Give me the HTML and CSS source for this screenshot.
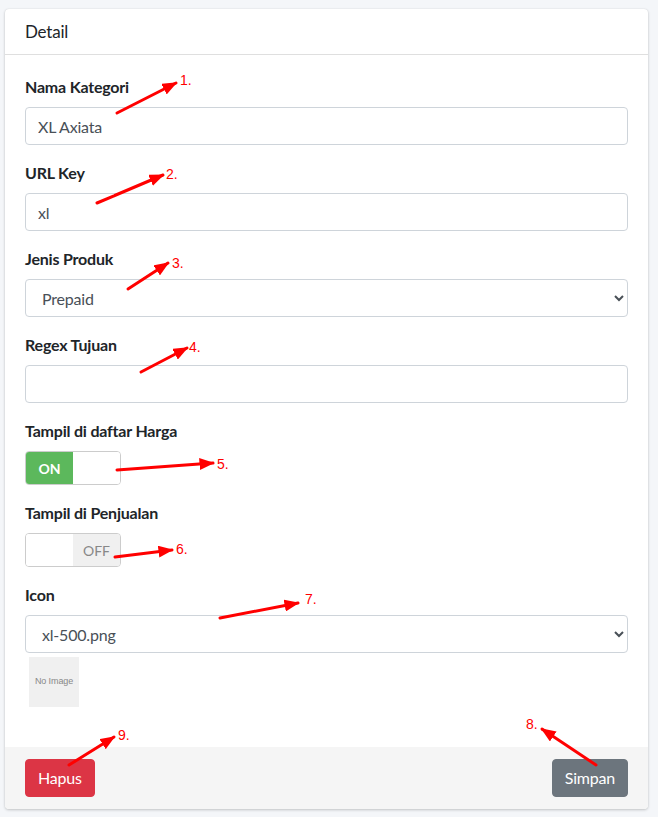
FILE: index.html
```html
<!DOCTYPE html>
<html>
<head>
<meta charset="utf-8">
<link rel="stylesheet" href="styles.css">
</head>
<body>
<div class="page">
  <div class="card">
    <div class="card-header"><h3 class="card-title">Detail</h3></div>
    <div class="card-body">
      <div class="form-group">
        <label class="lbl">Nama Kategori</label>
        <input class="form-control" type="text" value="XL Axiata">
      </div>
      <div class="form-group">
        <label class="lbl">URL Key</label>
        <input class="form-control" type="text" value="xl">
      </div>
      <div class="form-group">
        <label class="lbl">Jenis Produk</label>
        <select class="form-control"><option>Prepaid</option></select>
      </div>
      <div class="form-group">
        <label class="lbl">Regex Tujuan</label>
        <input class="form-control" type="text" value="">
      </div>
      <div class="form-group">
        <label class="lbl">Tampil di daftar Harga</label>
        <div class="toggle">
          <span class="t-on">ON</span><span class="t-handle"></span>
        </div>
      </div>
      <div class="form-group">
        <label class="lbl">Tampil di Penjualan</label>
        <div class="toggle">
          <span class="t-handle"></span><span class="t-off">OFF</span>
        </div>
      </div>
      <div class="form-group">
        <label class="lbl">Icon</label>
        <select class="form-control"><option>xl-500.png</option></select>
        <div class="noimg">No Image</div>
      </div>
    </div>
    <div class="card-footer">
      <button class="btn btn-danger">Hapus</button>
      <button class="btn btn-secondary">Simpan</button>
    </div>
  </div>
  <svg class="notes" width="658" height="817" viewBox="0 0 658 817">
    <defs>
      <marker id="ah" markerWidth="5" markerHeight="4" refX="4.5" refY="2" orient="auto" markerUnits="strokeWidth">
        <path d="M0,0 L5,2 L0,4 Z" fill="#f00"/>
      </marker>
    </defs>
    <g stroke="#f00" stroke-width="3" stroke-linecap="round" fill="none" marker-end="url(#ah)">
      <line x1="117" y1="113" x2="176" y2="83"/>
      <line x1="97" y1="203" x2="163" y2="175"/>
      <line x1="128" y1="289" x2="168" y2="263"/>
      <line x1="141" y1="372" x2="187" y2="348"/>
      <line x1="117" y1="470" x2="213" y2="463"/>
      <line x1="115" y1="557" x2="172" y2="550"/>
      <line x1="220" y1="618" x2="298" y2="603"/>
      <line x1="596" y1="765" x2="542" y2="729"/>
      <line x1="69" y1="765" x2="114" y2="737"/>
    </g>
    <g class="num" fill="#f00">
      <text x="180" y="85">1.</text>
      <text x="166" y="179">2.</text>
      <text x="172" y="268">3.</text>
      <text x="189" y="352">4.</text>
      <text x="217" y="469">5.</text>
      <text x="176" y="554">6.</text>
      <text x="305" y="604">7.</text>
      <text x="526" y="729">8.</text>
      <text x="118" y="740">9.</text>
    </g>
  </svg>
</div>
</body>
</html>
```
FILE: styles.css
```css
* { box-sizing: border-box; }
html, body { margin: 0; padding: 0; background: #f4f6f9; }
body {
  font-family: "Lato", "Source Sans Pro", "Liberation Sans", sans-serif;
  color: #212529;
  font-size: 16px;
  line-height: 1.5;
  letter-spacing: -0.2px;
}
.page {
  position: relative;
  width: 658px;
  height: 817px;
  padding: 9px 10px 0 5px;
}
.card {
  background: #fff;
  border-radius: 4px;
  box-shadow: 0 0 1px rgba(0,0,0,.125), 0 1px 3px rgba(0,0,0,.2);
  overflow: hidden;
}
.card-header {
  padding: 10px 20px;
  border-bottom: 1px solid rgba(0,0,0,.125);
  height: 46px;
}
.card-title {
  margin: 0;
  font-size: 17px;
  font-weight: 400;
  line-height: 25px;
}
.card-body {
  padding: 20px 20px 40px;
}
.form-group { margin-bottom: 16px; }
.form-group:last-child { margin-bottom: 0; }
.lbl {
  display: block;
  font-weight: 700;
  margin-bottom: 8px;
  line-height: 24px;
}
.form-control {
  display: block;
  width: 100%;
  height: 38px;
  padding: 6px 12px;
  font: inherit;
  font-size: 16px;
  letter-spacing: -0.2px;
  color: #495057;
  background: #fff;
  border: 1px solid #ced4da;
  border-radius: 4px;
  outline: none;
}
select.form-control { padding: 6px 12px; }
.toggle {
  display: flex;
  width: 96px;
  height: 34px;
  border: 1px solid #ccc;
  border-radius: 4px;
  overflow: hidden;
}
.toggle span {
  flex: 1;
  display: flex;
  align-items: center;
  justify-content: center;
  font-size: 14px;
  letter-spacing: 0;
}
.t-on { background: #5cb85c; color: #fff; font-weight: 700; }
.t-handle { background: #fff; }
.t-off { background: #f0f0f0; color: #888; }
.noimg {
  width: 50px;
  height: 50px;
  margin: 4px 0 0 4px;
  background: #f0f0f0;
  color: #888;
  font-family: "Liberation Sans", sans-serif;
  font-size: 9px;
  display: flex;
  align-items: center;
  justify-content: center;
  letter-spacing: -0.1px;
}
.card-footer {
  background: #f5f5f5;
  padding: 12px 20px;
  display: flex;
  justify-content: space-between;
}
.btn {
  height: 38px;
  padding: 6px 12px;
  font: inherit;
  font-size: 16px;
  letter-spacing: -0.2px;
  color: #fff;
  border: 1px solid transparent;
  border-radius: 4px;
}
.btn-danger { background: #dc3545; border-color: #dc3545; }
.btn-secondary { background: #6c757d; border-color: #6c757d; }
.notes {
  position: absolute;
  left: 0;
  top: 0;
  pointer-events: none;
}
.num text {
  font-family: "Liberation Sans", sans-serif;
  font-size: 14px;
  letter-spacing: 0;
}
```
